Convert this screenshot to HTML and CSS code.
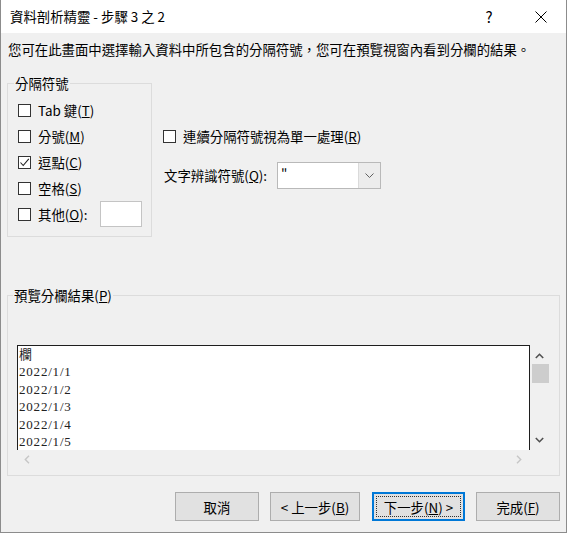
FILE: index.html
```html
<!DOCTYPE html>
<html lang="zh-Hant">

<head>
    <meta charset="UTF-8">
    <meta name="viewport" content="width=device-width, initial-scale=1.0">
    <title>資料剖析精靈</title>
    <link rel="stylesheet" href="styles.css">
</head>

<body>
    <div class="dialog">
        <div class="titlebar">
            <span class="title">資料剖析精靈 - 步驟 3 之 2</span>
            <span class="caption-btn help">?</span>
            <span class="caption-btn close">
                <svg width="12" height="12" viewBox="0 0 12 12">
                    <path d="M0.5 0.5 L11.5 11.5 M11.5 0.5 L0.5 11.5" stroke="#000" stroke-width="1" fill="none" />
                </svg>
            </span>
        </div>

        <div class="content">
            <p class="intro">您可在此畫面中選擇輸入資料中所包含的分隔符號，您可在預覽視窗內看到分欄的結果。</p>

            <div class="options">
                <fieldset class="group delimiters">
                    <legend>分隔符號</legend>
                    <label class="check"><span class="box"></span><span>Tab 鍵(<u>T</u>)</span></label>
                    <label class="check"><span class="box"></span><span>分號(<u>M</u>)</span></label>
                    <label class="check"><span class="box">
                        <svg width="11" height="11" viewBox="0 0 11 11">
                            <path d="M1.5 5.5 L4.2 8.5 L9.8 1.8" stroke="#222" stroke-width="1.1" fill="none" />
                        </svg>
                    </span><span>逗點(<u>C</u>)</span></label>
                    <label class="check"><span class="box"></span><span>空格(<u>S</u>)</span></label>
                    <label class="check"><span class="box"></span><span>其他(<u>O</u>):</span><span class="textbox"></span></label>
                </fieldset>

                <div class="side">
                    <label class="check"><span class="box"></span><span>連續分隔符號視為單一處理(<u>R</u>)</span></label>
                    <div class="qualifier">
                        <span class="field-label">文字辨識符號(<u>Q</u>):</span>
                        <div class="combo">
                            <span class="combo-value">"</span>
                            <span class="combo-arrow">
                                <svg width="9" height="5" viewBox="0 0 9 5">
                                    <path d="M0.5 0.5 L4.5 4.5 L8.5 0.5" stroke="#606060" stroke-width="1" fill="none" />
                                </svg>
                            </span>
                        </div>
                    </div>
                </div>
            </div>

            <fieldset class="group preview">
                <legend>預覽分欄結果(<u>P</u>)</legend>
                <div class="preview-area">
                    <div class="preview-list">
                        <div>欄</div>
                        <div>2022/1/1</div>
                        <div>2022/1/2</div>
                        <div>2022/1/3</div>
                        <div>2022/1/4</div>
                        <div>2022/1/5</div>
                    </div>
                    <div class="vscroll">
                        <svg class="arrow-up" width="9" height="6" viewBox="0 0 9 6">
                            <path d="M0.8 5 L4.5 1.3 L8.2 5" stroke="#505050" stroke-width="1.6" fill="none" />
                        </svg>
                        <div class="thumb"></div>
                        <svg class="arrow-down" width="9" height="6" viewBox="0 0 9 6">
                            <path d="M0.8 1 L4.5 4.7 L8.2 1" stroke="#505050" stroke-width="1.6" fill="none" />
                        </svg>
                    </div>
                </div>
                <div class="hscroll">
                    <svg width="6" height="9" viewBox="0 0 6 9">
                        <path d="M5 0.8 L1.3 4.5 L5 8.2" stroke="#c6c6c6" stroke-width="1.4" fill="none" />
                    </svg>
                    <svg width="6" height="9" viewBox="0 0 6 9">
                        <path d="M1 0.8 L4.7 4.5 L1 8.2" stroke="#c6c6c6" stroke-width="1.4" fill="none" />
                    </svg>
                </div>
            </fieldset>

            <div class="buttons">
                <button class="btn cancel">取消</button>
                <button class="btn back">&lt; 上一步(<u>B</u>)</button>
                <button class="btn next default">下一步(<u>N</u>) &gt;</button>
                <button class="btn finish">完成(<u>F</u>)</button>
            </div>
        </div>
    </div>
</body>

</html>
```

FILE: styles.css
```css
body {
    margin: 0;
    padding: 0;
    font-family: "Noto Sans CJK TC", "Noto Sans", sans-serif;
    font-size: 13.4px;
    line-height: 17px;
    color: #000;
    background-color: #f0f0f0;
}

.dialog {
    width: 567px;
    height: 533px;
    box-sizing: border-box;
    border: 1px solid #8c8c8c;
    border-top: none;
    background-color: #f0f0f0;
}

/* title bar */
.titlebar {
    height: 33px;
    display: flex;
    align-items: center;
    padding-left: 9px;
    background-color: #fff;
}

.title {
    flex: 1;
}

.caption-btn {
    width: 46px;
    height: 33px;
    display: flex;
    align-items: center;
    justify-content: center;
}

.help {
    font-size: 15px;
    margin-right: 6px;
}

.close {
    margin-right: 2px;
}

/* body */
.content {
    padding: 0 6px;
}

.intro {
    margin: 8px 0 0;
    padding-left: 1px;
}

.options {
    display: flex;
    margin-top: 17px;
}

.group {
    margin: 0;
    padding: 0;
    border: 1px solid #dcdcdc;
    box-sizing: border-box;
}

.group legend {
    margin-left: -4px;
    padding: 0 1px;
}

.delimiters {
    width: 145px;
    padding: 5px 9px 9px 10px;
}

.check {
    display: flex;
    align-items: center;
    gap: 7px;
    height: 26px;
}

.box {
    width: 13px;
    height: 13px;
    box-sizing: border-box;
    border: 1px solid #333;
    background-color: #fff;
    display: flex;
    align-items: center;
    justify-content: center;
}

.textbox {
    width: 42px;
    height: 26px;
    box-sizing: border-box;
    margin-left: auto;
    border: 1px solid #c4c4c4;
    background-color: #fff;
}

.side {
    margin-left: 11px;
    padding-top: 48px;
}

.qualifier {
    display: flex;
    align-items: center;
    margin-top: 13px;
    padding-left: 1px;
}

.field-label {
    width: 113px;
}

.combo {
    width: 104px;
    height: 27px;
    box-sizing: border-box;
    display: flex;
    border: 1px solid #b9b9b9;
    background-color: #fff;
}

.combo-value {
    flex: 1;
    padding-left: 3px;
    line-height: 22px;
}

.combo-arrow {
    width: 21px;
    display: flex;
    align-items: center;
    justify-content: center;
    border-left: 1px solid #dadada;
    background-color: #ececec;
}

/* preview */
.preview {
    width: 553px;
    margin-top: 50px;
    padding: 41px 9px 7px 9px;
}

.preview-area {
    display: flex;
}

.preview-list {
    width: 513px;
    height: 105px;
    box-sizing: border-box;
    padding-left: 1px;
    border: 1px solid #1e1e1e;
    border-bottom: none;
    background-color: #fff;
    font-family: "Liberation Serif", "Noto Sans CJK TC", serif;
    font-size: 13px;
    line-height: 17.4px;
    letter-spacing: 0.8px;
    color: #222;
}

.vscroll {
    width: 19px;
    height: 105px;
    display: flex;
    flex-direction: column;
    align-items: center;
}

.arrow-up {
    margin-top: 8px;
}

.thumb {
    width: 17px;
    height: 19px;
    margin-top: 5px;
    margin-left: 1px;
    background-color: #cdcdcd;
}

.arrow-down {
    margin-top: auto;
    margin-bottom: 7px;
}

.hscroll {
    width: 513px;
    height: 18px;
    display: flex;
    align-items: center;
    justify-content: space-between;
    padding: 0 8px 0 7px;
    box-sizing: border-box;
}

/* buttons */
.buttons {
    display: flex;
    justify-content: flex-end;
    margin-top: 16px;
}

.btn {
    height: 29px;
    margin-left: 11px;
    padding: 0;
    font-family: inherit;
    font-size: 13.4px;
    color: #000;
    background-color: #e1e1e1;
    border: 1px solid #adadad;
}

.cancel {
    width: 84px;
}

.back {
    width: 90px;
    margin-right: 1px;
}

.next {
    width: 93px;
}

.finish {
    width: 84px;
}

.default {
    border: 2px solid #0078d7;
    outline: 1px dotted #333;
    outline-offset: -5px;
}
```
